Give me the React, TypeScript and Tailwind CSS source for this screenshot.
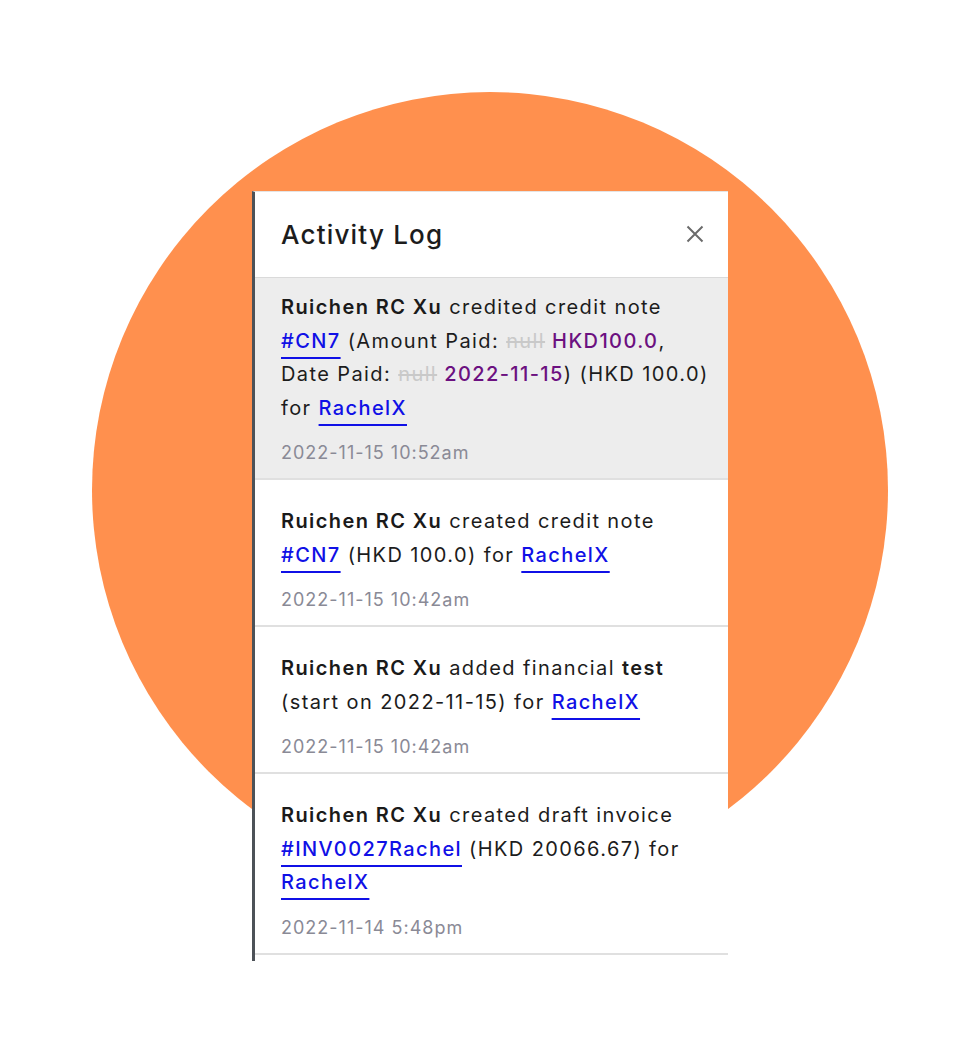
import React from "react";

const font = { fontFamily: "Inter, 'Open Sans', sans-serif" };

function Link({ children }: { children: React.ReactNode }) {
  return (
    <span className="font-medium text-[#1010e6] underline decoration-[1.5px] underline-offset-[9px]">
      {children}
    </span>
  );
}

function Changed({ from, to }: { from: string; to: string }) {
  return (
    <>
      <span className="text-[#c9c9c9] line-through">{from}</span>{" "}
      <span className="font-medium text-[#6c1080]">{to}</span>
    </>
  );
}

function Name() {
  return <span className="font-semibold text-[#1a1a1a]">Ruichen RC Xu</span>;
}

function Item({
  lines,
  time,
  active,
  first,
}: {
  lines: React.ReactNode[];
  time: string;
  active?: boolean;
  first?: boolean;
}) {
  return (
    <div
      className={`border-b-2 border-[#e0e0e0] pl-[26px] pr-[20px] pb-[12px] ${
        first ? "pt-[13px]" : "pt-[25px]"
      } ${active ? "bg-[#ededed]" : "bg-white"}`}
    >
      <div className="text-[20px] leading-[33.5px] tracking-[1.4px] text-[#1c1c1c]">
        {lines.map((l, i) => (
          <div key={i} className="whitespace-nowrap">
            {l}
          </div>
        ))}
      </div>
      <div className="mt-[15px] text-[18px] leading-[26px] tracking-[1px] text-[#8a8a96]">{time}</div>
    </div>
  );
}

export default function App() {
  return (
    <div className="relative h-[1054px] w-full overflow-hidden bg-white" style={font}>
      {/* orange backdrop */}
      <div className="absolute left-[92px] top-[92px] h-[796px] w-[796px] rounded-full bg-[#ff904e]" />

      <div className="relative flex justify-center pt-[191px]">
        <div className="w-[476px] border-t border-l-[3px] border-t-[#e4e4e4] border-l-[#4d5258] bg-white pb-[6px]">
          {/* header */}
          <div className="flex h-[86px] items-center justify-between border-b border-[#dadada] pl-[26px] pr-[24px]">
            <h2 className="text-[26px] font-medium tracking-[1.2px] text-[#1c1c1c]">Activity Log</h2>
            <svg width="18" height="18" viewBox="0 0 18 18" className="mt-[-2px]">
              <path d="M1.5 1.5 L16.5 16.5 M16.5 1.5 L1.5 16.5" stroke="#6b6b6b" strokeWidth="2" />
            </svg>
          </div>

          <Item
            active
            first
            lines={[
              <>
                <Name /> credited credit note
              </>,
              <>
                <Link>#CN7</Link> (Amount Paid: <Changed from="null" to="HKD100.0" />,
              </>,
              <>
                Date Paid: <Changed from="null" to="2022-11-15" />) (HKD 100.0)
              </>,
              <>
                for <Link>RachelX</Link>
              </>,
            ]}
            time="2022-11-15 10:52am"
          />
          <Item
            lines={[
              <>
                <Name /> created credit note
              </>,
              <>
                <Link>#CN7</Link> (HKD 100.0) for <Link>RachelX</Link>
              </>,
            ]}
            time="2022-11-15 10:42am"
          />
          <Item
            lines={[
              <>
                <Name /> added financial <span className="font-semibold">test</span>
              </>,
              <>
                (start on 2022-11-15) for <Link>RachelX</Link>
              </>,
            ]}
            time="2022-11-15 10:42am"
          />
          <Item
            lines={[
              <>
                <Name /> created draft invoice
              </>,
              <>
                <Link>#INV0027Rachel</Link> (HKD 20066.67) for
              </>,
              <>
                <Link>RachelX</Link>
              </>,
            ]}
            time="2022-11-14 5:48pm"
          />
        </div>
      </div>
    </div>
  );
}
